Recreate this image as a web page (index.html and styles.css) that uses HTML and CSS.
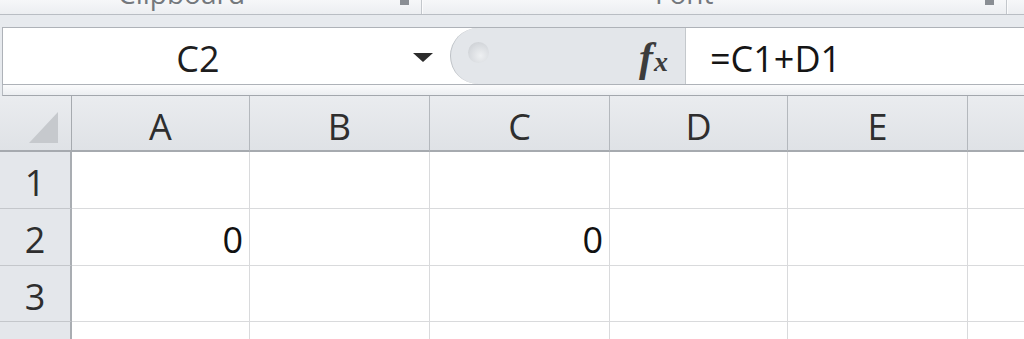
FILE: index.html
```html
<!DOCTYPE html>
<html lang="en">
<head>
    <meta charset="UTF-8">
    <title>Formula bar</title>
    <link rel="stylesheet" href="styles.css">
</head>
<body>
    <div class="ribbon">
        <div class="group group-clip">
            <span class="glabel">Clipboard</span>
            <span class="launcher"></span>
        </div>
        <div class="group group-font">
            <span class="glabel">Font</span>
            <span class="launcher"></span>
        </div>
        <div class="group group-rest"></div>
    </div>

    <div class="fbar-wrap">
        <div class="fbar">
            <div class="namebox">
                <span class="ref">C2</span>
                <span class="arrow"></span>
            </div>
            <div class="pill">
                <span class="grip"></span>
                <span class="fx">f<span class="fx-x">x</span></span>
            </div>
            <div class="formula">=C1+D1</div>
        </div>
        <div class="fbar-foot"></div>
    </div>

    <div class="sheet">
        <div class="hd corner"><span class="tri"></span></div>
        <div class="hd col">A</div>
        <div class="hd col">B</div>
        <div class="hd col">C</div>
        <div class="hd col">D</div>
        <div class="hd col">E</div>
        <div class="hd col last"></div>

        <div class="rh">1</div>
        <div class="cell"></div><div class="cell"></div><div class="cell"></div>
        <div class="cell"></div><div class="cell"></div><div class="cell last"></div>

        <div class="rh">2</div>
        <div class="cell num">0</div><div class="cell"></div><div class="cell num">0</div>
        <div class="cell"></div><div class="cell"></div><div class="cell last"></div>

        <div class="rh">3</div>
        <div class="cell"></div><div class="cell"></div><div class="cell"></div>
        <div class="cell"></div><div class="cell"></div><div class="cell last"></div>

        <div class="rh open"></div>
        <div class="cell open"></div><div class="cell open"></div><div class="cell open"></div>
        <div class="cell open"></div><div class="cell open"></div><div class="cell last open"></div>
    </div>
</body>
</html>
```

FILE: styles.css
```css
* {
    box-sizing: border-box;
}
html, body {
    margin: 0;
    padding: 0;
    width: 1024px;
    height: 339px;
    overflow: hidden;
    background: #ffffff;
    font-family: "Open Sans", "Noto Sans", sans-serif;
}

/* ribbon group labels, cut off at the top */
.ribbon {
    display: flex;
    height: 15px;
    overflow: hidden;
    background: linear-gradient(#f6f7f9, #eceef1);
    border-bottom: 1px solid #b9bdc3;
}
.group {
    display: flex;
    align-items: flex-start;
    border-right: 1px solid #c3c7cc;
    box-shadow: 1px 0 0 #fbfbfc;
}
.group-clip {
    width: 422px;
    padding-left: 118px;
}
.group-font {
    width: 585px;
    padding-left: 233px;
}
.group-rest {
    flex: 1;
    border-right: none;
    box-shadow: none;
}
.glabel {
    font-size: 28px;
    line-height: 28px;
    margin-top: -21px;
    color: #74787d;
}
.launcher {
    margin-left: auto;
    margin-right: 12px;
    width: 9px;
    height: 5px;
    background: #8a8e94;
}

/* formula bar */
.fbar-wrap {
    background: #e7eaee;
    padding-top: 12px;
}
.fbar {
    display: flex;
    height: 58px;
    margin-left: 2px;
    background: #ffffff;
    border-top: 1px solid #aeb2b8;
    border-bottom: 1px solid #aeb2b8;
    border-left: 1px solid #aeb2b8;
}
.namebox {
    width: 447px;
    display: flex;
    align-items: center;
}
.ref {
    width: 390px;
    text-align: center;
    font-size: 36px;
    padding-top: 4px;
    color: #1e1e1e;
}
.arrow {
    margin-left: 20px;
    margin-top: 3px;
    width: 0;
    height: 0;
    border-left: 10px solid transparent;
    border-right: 10px solid transparent;
    border-top: 9px solid #2c2c2c;
}
.pill {
    width: 236px;
    display: flex;
    align-items: center;
    padding-left: 17px;
    padding-right: 17px;
    background: #e3e6ea;
    border: 1px solid #bdc1c6;
    border-right-color: #c4c8cc;
    border-top: none;
    border-bottom: none;
    border-radius: 28px 0 0 28px;
}
.grip {
    width: 21px;
    height: 21px;
    margin-top: -8px;
    border-radius: 50%;
    background: radial-gradient(circle at 60% 65%, #eef0f2 0%, #d9dce0 55%, #c6c9cd 100%);
}
.fx {
    margin-left: auto;
    font-family: "Liberation Serif", "DejaVu Serif", serif;
    font-style: italic;
    font-weight: bold;
    font-size: 42px;
    line-height: 1;
    color: #3c3c3c;
    padding-top: 2px;
}
.fx-x {
    font-size: 28px;
    margin-left: 1px;
}
.formula {
    flex: 1;
    display: flex;
    align-items: center;
    padding-left: 24px;
    padding-top: 4px;
    font-size: 36px;
    color: #151515;
}
.fbar-foot {
    height: 11px;
    margin-left: 2px;
    background: linear-gradient(#fbfbfc, #eceef1);
    border-left: 1px solid #b6bac0;
    border-bottom: 1px solid #a3a7ad;
}

/* sheet grid */
.sheet {
    display: grid;
    grid-template-columns: 72px 178px 180px 180px 178px 180px 1fr;
    grid-template-rows: 56px 57px 57px 56px 17px;
}
.hd {
    background: linear-gradient(#eaecef, #dfe2e6);
    border-right: 1px solid #b4b8bd;
    border-bottom: 2px solid #a6aaaf;
}
.col {
    display: flex;
    align-items: center;
    justify-content: center;
    padding-top: 6px;
    font-size: 36px;
    color: #2e2e2e;
}
.corner {
    display: flex;
    align-items: flex-end;
    justify-content: flex-end;
    padding-right: 13px;
    padding-bottom: 7px;
    border-right-color: #a6aaaf;
}
.tri {
    width: 29px;
    height: 31px;
    background: #c6c9cd;
    clip-path: polygon(100% 0, 100% 100%, 0 100%);
}
.rh {
    display: flex;
    align-items: center;
    justify-content: center;
    padding-top: 5px;
    background: #e4e7eb;
    border-right: 2px solid #a9adb2;
    border-bottom: 1px solid #c4c7cb;
    font-size: 36px;
    color: #2e2e2e;
}
.cell {
    border-right: 1px solid #d9dadc;
    border-bottom: 1px solid #d9dadc;
}
.num {
    display: flex;
    align-items: center;
    justify-content: flex-end;
    padding-right: 6px;
    padding-top: 4px;
    font-size: 36px;
    color: #111111;
}
.last {
    border-right: none;
}
/* last row runs off the bottom of the window */
.open {
    border-bottom: none;
}
```
